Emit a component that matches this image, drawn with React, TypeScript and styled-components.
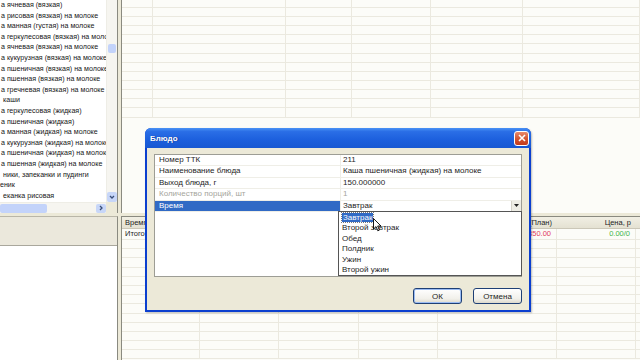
import React from 'react';
import styled, { createGlobalStyle } from 'styled-components';

const GlobalStyle = createGlobalStyle`
  html, body {
    margin: 0;
    padding: 0;
    background: #ece9d8;
  }
  body {
    font-family: "Liberation Sans", Arial, sans-serif;
    font-size: 7.5px;
    color: #1e1e1e;
  }
`;

const Screen = styled.div`
  position: relative;
  width: 640px;
  height: 360px;
  overflow: hidden;
  display: grid;
  grid-template-columns: 118px 1fr;
  grid-template-rows: 213px 1fr;
  column-gap: 3px;
  row-gap: 3px;
  background: #ece9d8;
`;

/* ---------- левое дерево блюд ---------- */

const TreePane = styled.div`
  display: grid;
  grid-template-columns: 1fr 11px;
  grid-template-rows: 1fr 11px;
  background: #fff;
  border-right: 1px solid #8a8a80;
  overflow: hidden;
`;

const TreeList = styled.div`
  overflow: hidden;
  font-size: 7.1px;
  color: #161616;
`;

const TreeItem = styled.div<{ $indent: number }>`
  height: 10.6px;
  line-height: 10.6px;
  padding-left: ${(p) => p.$indent}px;
  white-space: nowrap;
  overflow: hidden;
`;

const VScroll = styled.div`
  display: flex;
  flex-direction: column;
  background: #f6f5f0;
  border-left: 1px solid #eeede6;
`;

const VTrack = styled.div`
  flex: 1;
  display: flex;
  flex-direction: column;
  padding-top: 44px;
`;

const VThumb = styled.div`
  height: 9px;
  margin: 0 1px;
  border-radius: 2px;
  background: #c3d3fa;
`;

const ArrowBtn = styled.div<{ $w: number; $h: number }>`
  width: ${(p) => p.$w}px;
  height: ${(p) => p.$h}px;
  display: flex;
  align-items: center;
  justify-content: center;
  border-radius: 2px;
  background: #c7d6f8;
  color: #4d6185;
  flex-shrink: 0;
`;

const HScroll = styled.div`
  display: flex;
  align-items: center;
  background: #f6f5f0;
  border-top: 1px solid #eeede6;
`;

const HThumb = styled.div`
  width: 47px;
  height: 9px;
  border-radius: 2px;
  background: #c3d3fa;
`;

const HTrack = styled.div`
  flex: 1;
`;

const Corner = styled.div`
  background: #ece9d8;
`;

/* ---------- верхняя правая таблица ---------- */

const TopGrid = styled.div`
  background: #fcfcf8;
  border-left: 1px solid #8a8a80;
  overflow: hidden;
`;

const GridRow = styled.div<{ $h: number; $cols: string }>`
  display: grid;
  grid-template-columns: ${(p) => p.$cols};
  height: ${(p) => p.$h}px;
  border-bottom: 1px solid #ebe9df;
  box-sizing: border-box;
`;

const GridCell = styled.div<{ $align?: string; $color?: string }>`
  border-right: 1px solid #ebe9df;
  padding: 0 5px 0 3px;
  text-align: ${(p) => p.$align || 'left'};
  color: ${(p) => p.$color || 'inherit'};
  white-space: nowrap;
  overflow: hidden;
  line-height: 10px;
`;

/* ---------- нижние панели ---------- */

const BottomLeft = styled.div`
  display: flex;
  flex-direction: column;
  border-top: 1px solid #b9b6a8;
  border-right: 1px solid #8a8a80;
`;

const ToolBand = styled.div`
  height: 28px;
  background: #ebe8dc;
  border-bottom: 1px solid #a9a79c;
`;

const WhiteArea = styled.div`
  flex: 1;
  background: #fff;
`;

const BottomGrid = styled.div`
  background: #fcfcf8;
  border-left: 1px solid #8a8a80;
  overflow: hidden;
`;

const HeaderRow = styled.div<{ $cols: string }>`
  display: grid;
  grid-template-columns: ${(p) => p.$cols};
  height: 13px;
  align-items: center;
  background: linear-gradient(#f1efe4, #e4e1d2);
  border-top: 1px solid #8a8a80;
  border-bottom: 1px solid #cbc7b8;
  box-sizing: border-box;
`;

const HeaderCell = styled.div<{ $align?: string }>`
  padding: 0 5px 0 3px;
  text-align: ${(p) => p.$align || 'left'};
  white-space: nowrap;
  overflow: hidden;
`;

/* ---------- диалог ---------- */

const Dialog = styled.div`
  position: absolute;
  left: 145px;
  top: 128px;
  width: 386px;
  height: 184px;
  display: flex;
  flex-direction: column;
  background: #0b3fcf;
  border-radius: 6px 6px 0 0;
  box-sizing: border-box;
  padding: 0 2px 2px;
  box-shadow: 1px 1px 2px rgba(0, 0, 0, 0.25);
  font-size: 8px;
`;

const TitleBar = styled.div`
  height: 20px;
  display: flex;
  align-items: center;
  justify-content: space-between;
  padding: 0 1px 0 3px;
  margin: 0 -2px;
  border-radius: 6px 6px 0 0;
  background: linear-gradient(#4a92f5 0%, #2a6ee6 18%, #1c5fdd 60%, #1858d2 100%);
`;

const TitleText = styled.span`
  color: #fff;
  font-size: 8px;
  font-weight: bold;
  padding-left: 2px;
  text-shadow: 1px 0 1px rgba(0, 0, 50, 0.4);
`;

const CloseBtn = styled.div`
  width: 15px;
  height: 15px;
  margin-right: 1px;
  border: 1px solid #fff;
  border-radius: 3px;
  background: linear-gradient(#e98a6c, #d2532f 55%, #c33b1c);
  display: flex;
  align-items: center;
  justify-content: center;
  box-sizing: border-box;
`;

const DialogBody = styled.div`
  flex: 1;
  display: flex;
  flex-direction: column;
  background: #ece9d8;
  padding: 6px 7px 6px 7px;
  gap: 11px;
`;

const PropGrid = styled.div`
  height: 123px;
  background: #fff;
  border: 1px solid #9d9d95;
  box-sizing: border-box;
`;

const PropRow = styled.div`
  display: grid;
  grid-template-columns: 186px 1fr;
  height: 11.4px;
  border-bottom: 1px solid #efeee7;
  box-sizing: border-box;
`;

const PropName = styled.div<{ $selected?: boolean; $disabled?: boolean }>`
  padding-left: 4px;
  line-height: 10.4px;
  border-right: 1px solid #efeee7;
  background: ${(p) => (p.$selected ? '#316ac5' : 'transparent')};
  color: ${(p) => (p.$selected ? '#fff' : p.$disabled ? '#a5a59c' : 'inherit')};
`;

const PropValue = styled.div<{ $disabled?: boolean }>`
  display: flex;
  justify-content: space-between;
  align-items: stretch;
  padding-left: 2px;
  line-height: 10.4px;
  color: ${(p) => (p.$disabled ? '#a5a59c' : 'inherit')};
`;

const ComboBtn = styled.div`
  width: 9px;
  display: flex;
  align-items: center;
  justify-content: center;
  background: #eeede5;
  border-left: 1px solid #d4d2c8;
`;

const Buttons = styled.div`
  display: flex;
  justify-content: flex-end;
  gap: 11px;
`;

const Button = styled.div<{ $default?: boolean }>`
  width: 49px;
  height: 16px;
  box-sizing: border-box;
  border: 1px solid #1e3f75;
  border-radius: 3px;
  background: linear-gradient(#ffffff, #f1f0ea 70%, #dcd9cc);
  box-shadow: ${(p) => (p.$default ? 'inset 0 0 0 1px #9bbcf3' : 'none')};
  display: flex;
  align-items: center;
  justify-content: center;
`;

const DropList = styled.div`
  position: absolute;
  left: 193px;
  top: 83px;
  width: 184px;
  height: 65px;
  box-sizing: border-box;
  background: #fff;
  border: 1px solid #555;
  padding: 1px 0 0 3px;
`;

const DropItem = styled.div`
  height: 10.4px;
  line-height: 10.4px;
`;

const Highlight = styled.span`
  background: #316ac5;
  color: #fff;
  outline: 1px dotted #777;
  padding: 0 1px;
`;

const Cursor = styled.svg`
  position: absolute;
  left: 373px;
  top: 218px;
`;

/* ---------- данные ---------- */

const treeItems = [
  { t: 'а ячневая (вязкая)', i: 1 },
  { t: 'а рисовая (вязкая) на молоке', i: 1 },
  { t: 'а манная (густая) на молоке', i: 1 },
  { t: 'а геркулесовая (вязкая) на молоке', i: 1 },
  { t: 'а ячневая (вязкая) на молоке', i: 1 },
  { t: 'а кукурузная (вязкая) на молоке', i: 1 },
  { t: 'а пшеничная (вязкая) на молоке', i: 1 },
  { t: 'а пшенная (вязкая) на молоке', i: 1 },
  { t: 'а гречневая (вязкая) на молоке', i: 1 },
  { t: 'каши', i: 3 },
  { t: 'а геркулесовая (жидкая)', i: 1 },
  { t: 'а пшеничная (жидкая)', i: 1 },
  { t: 'а манная (жидкая) на молоке', i: 1 },
  { t: 'а кукурузная (жидкая) на молоке', i: 1 },
  { t: 'а пшеничная (жидкая) на молоке', i: 1 },
  { t: 'а пшенная (жидкая) на молоке', i: 1 },
  { t: 'ники, запеканки и пудинги', i: 3 },
  { t: 'еник', i: 0 },
  { t: 'еканка рисовая', i: 3 },
];

const topCols = '31px 133px 66px 79px 92px 1fr';
const topRows = [8, 9, 9, 9, 9, 10, 9, 9, 9, 9, 9, 9, 10];

const bottomCols = '78px 79px 80px 79px 119px 79px 1fr';
const bottomRows = Array.from({ length: 13 }, () => 9.2);

const props = [
  { name: 'Номер ТТК', value: '211' },
  { name: 'Наименование блюда', value: 'Каша пшеничная (жидкая) на молоке' },
  { name: 'Выход блюда, г', value: '150.000000' },
  { name: 'Количество порций, шт', value: '1', disabled: true },
];

const meals = ['Завтрак', 'Второй завтрак', 'Обед', 'Полдник', 'Ужин', 'Второй ужин'];

function Chevron({ dir }: { dir: 'down' | 'right' }) {
  return (
    <svg width="6" height="6" viewBox="0 0 6 6">
      {dir === 'down' ? (
        <path d="M1 2 L3 4 L5 2" fill="none" stroke="#3a4f7a" strokeWidth="1.3" />
      ) : (
        <path d="M2 1 L4 3 L2 5" fill="none" stroke="#3a4f7a" strokeWidth="1.3" />
      )}
    </svg>
  );
}

export default function App() {
  return (
    <>
      <GlobalStyle />
      <Screen>
        <TreePane>
          <TreeList>
            {treeItems.map((it, idx) => (
              <TreeItem key={idx} $indent={it.i}>
                {it.t}
              </TreeItem>
            ))}
          </TreeList>
          <VScroll>
            <VTrack>
              <VThumb />
            </VTrack>
            <ArrowBtn $w={10} $h={10}>
              <Chevron dir="down" />
            </ArrowBtn>
          </VScroll>
          <HScroll>
            <HThumb />
            <HTrack />
            <ArrowBtn $w={10} $h={9}>
              <Chevron dir="right" />
            </ArrowBtn>
          </HScroll>
          <Corner />
        </TreePane>

        <TopGrid>
          {topRows.map((h, r) => (
            <GridRow key={r} $h={h} $cols={topCols}>
              {Array.from({ length: 6 }).map((_, c) => (
                <GridCell key={c} />
              ))}
            </GridRow>
          ))}
        </TopGrid>

        <BottomLeft>
          <ToolBand />
          <WhiteArea />
        </BottomLeft>

        <BottomGrid>
          <HeaderRow $cols={bottomCols}>
            <HeaderCell>Время</HeaderCell>
            <HeaderCell>Блюдо</HeaderCell>
            <HeaderCell>Выход, г</HeaderCell>
            <HeaderCell>Порции</HeaderCell>
            <HeaderCell $align="right">Сумма (План)</HeaderCell>
            <HeaderCell $align="right">Цена, р</HeaderCell>
            <HeaderCell />
          </HeaderRow>
          <GridRow $h={11} $cols={bottomCols}>
            <GridCell>Итого</GridCell>
            <GridCell />
            <GridCell />
            <GridCell />
            <GridCell $align="right" $color="#e2405a">
              350.00
            </GridCell>
            <GridCell $align="right" $color="#3fb54a">
              0.00/0
            </GridCell>
            <GridCell />
          </GridRow>
          {bottomRows.map((h, r) => (
            <GridRow key={r} $h={h} $cols={bottomCols}>
              {Array.from({ length: 7 }).map((_, c) => (
                <GridCell key={c} />
              ))}
            </GridRow>
          ))}
        </BottomGrid>

        <Dialog>
          <TitleBar>
            <TitleText>Блюдо</TitleText>
            <CloseBtn>
              <svg width="8" height="8" viewBox="0 0 8 8">
                <path d="M1 1 L7 7 M7 1 L1 7" stroke="#fff" strokeWidth="1.6" />
              </svg>
            </CloseBtn>
          </TitleBar>
          <DialogBody>
            <PropGrid>
              {props.map((p) => (
                <PropRow key={p.name}>
                  <PropName $disabled={p.disabled}>{p.name}</PropName>
                  <PropValue $disabled={p.disabled}>{p.value}</PropValue>
                </PropRow>
              ))}
              <PropRow>
                <PropName $selected>Время</PropName>
                <PropValue>
                  <span>Завтрак</span>
                  <ComboBtn>
                    <svg width="5" height="3" viewBox="0 0 5 3">
                      <path d="M0 0 L5 0 L2.5 3 Z" fill="#222" />
                    </svg>
                  </ComboBtn>
                </PropValue>
              </PropRow>
            </PropGrid>
            <Buttons>
              <Button $default>ОК</Button>
              <Button>Отмена</Button>
            </Buttons>
          </DialogBody>
          <DropList>
            {meals.map((m, i) => (
              <DropItem key={m}>{i === 0 ? <Highlight>{m}</Highlight> : m}</DropItem>
            ))}
          </DropList>
        </Dialog>

        <Cursor width="9" height="14" viewBox="0 0 9 14">
          <path d="M0.5 0.5 L0.5 11 L3 8.6 L4.8 12.8 L6.4 12.1 L4.7 8 L8 8 Z" fill="#fff" stroke="#000" strokeWidth="0.9" />
        </Cursor>
      </Screen>
    </>
  );
}
